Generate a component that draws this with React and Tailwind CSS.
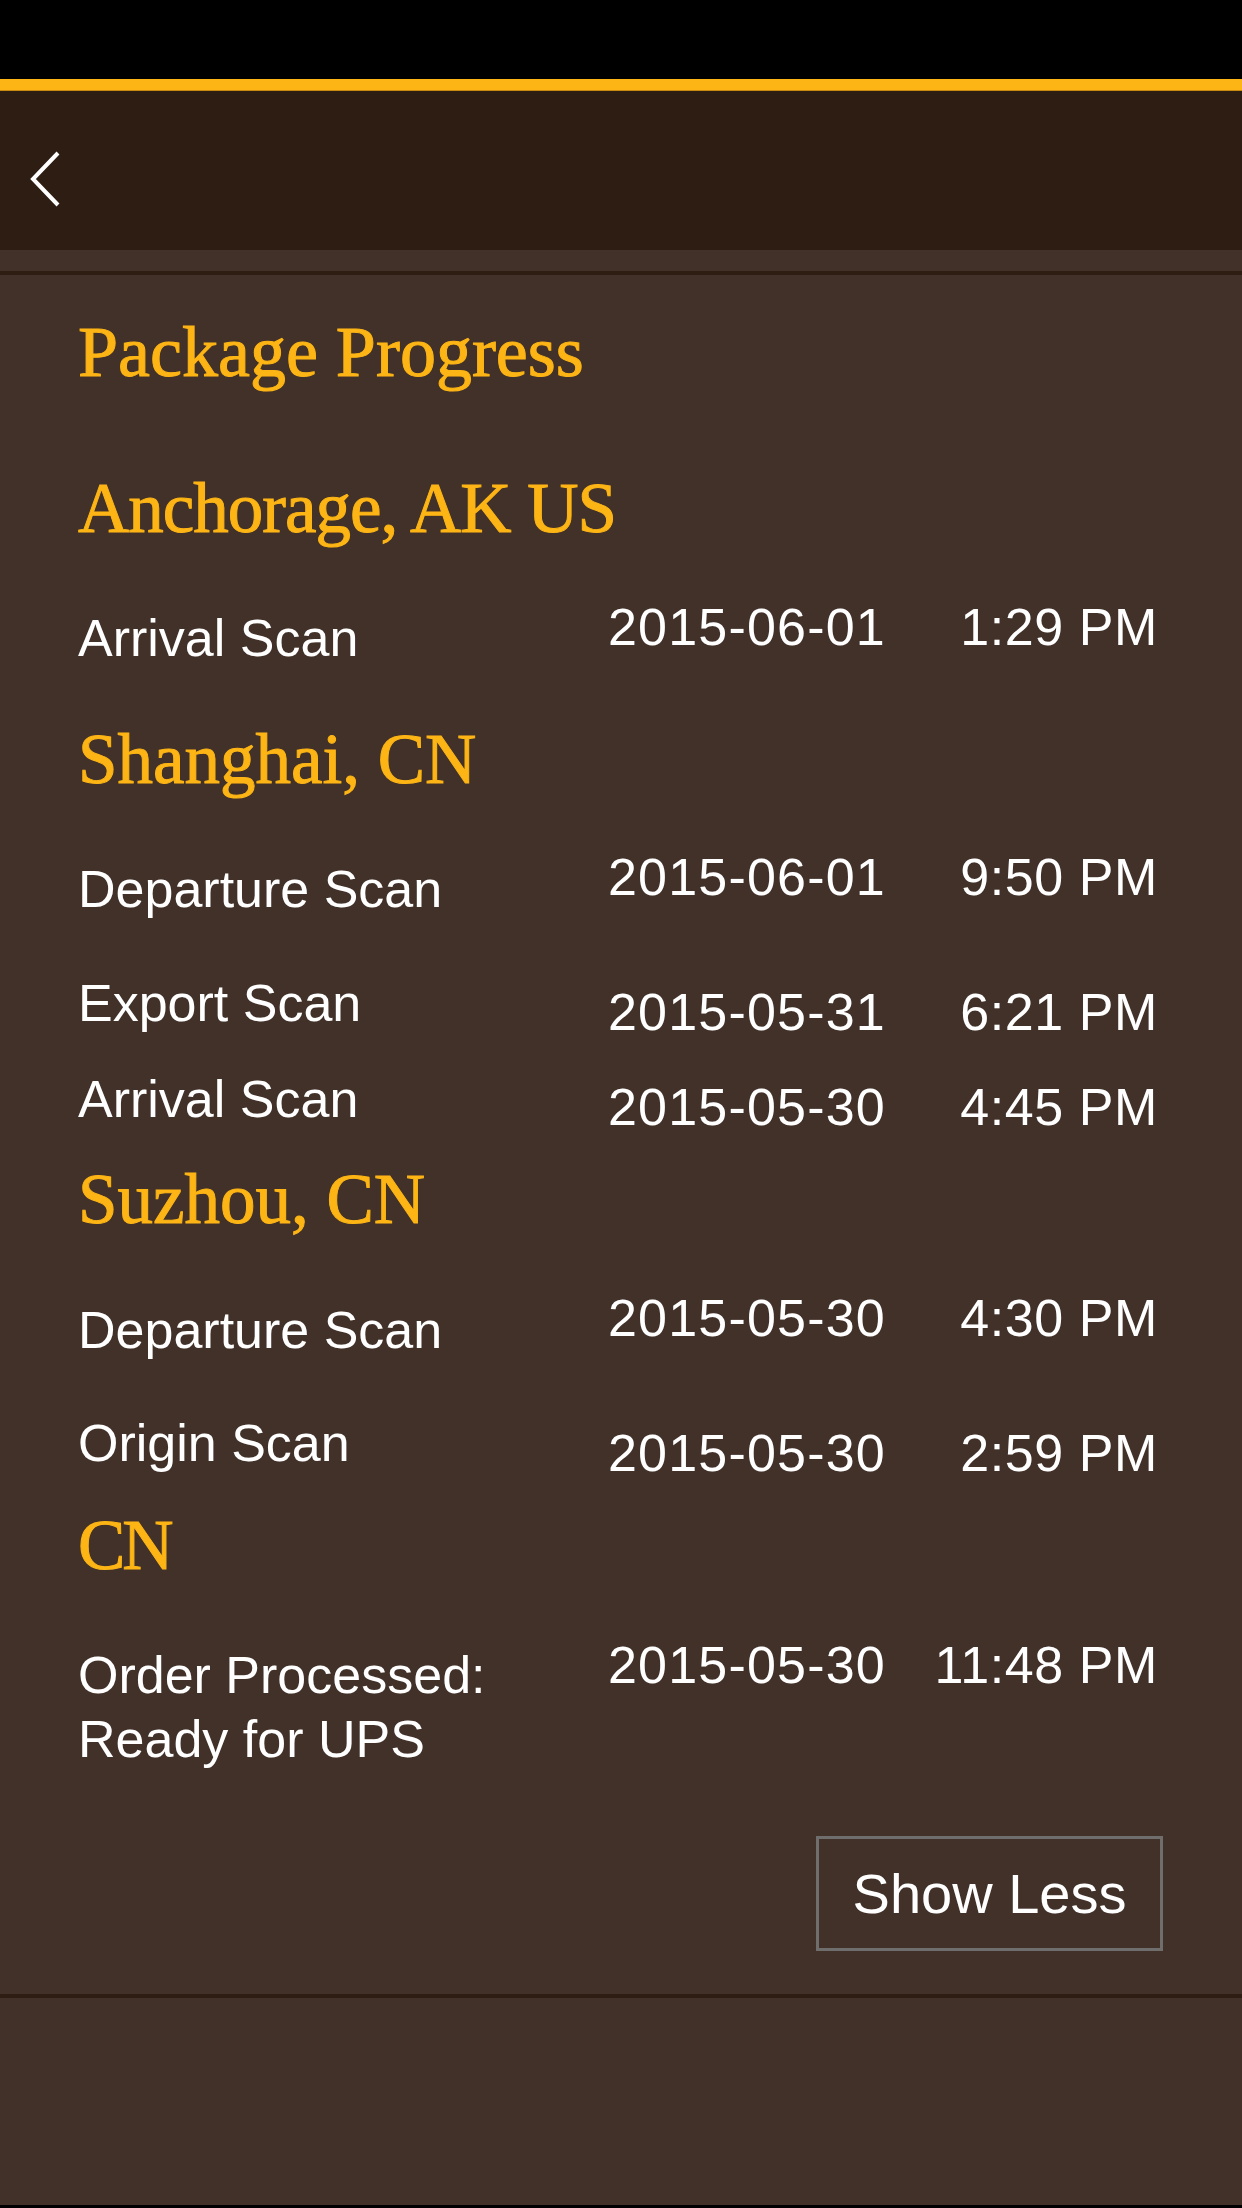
const sections = [
  {
    place: "Anchorage, AK US",
    mt: "mt-[86px]",
    track: "tracking-[-1px]",
    rows: [
      { label: "Arrival Scan", date: "2015-06-01", time: "1:29 PM", mt: "mt-[58px]", lp: "pt-[11px]", dp: "pt-0" },
    ],
  },
  {
    place: "Shanghai, CN",
    mt: "mt-[60px]",
    track: "tracking-normal",
    rows: [
      { label: "Departure Scan", date: "2015-06-01", time: "9:50 PM", mt: "mt-[57px]", lp: "pt-[12px]", dp: "pt-0" },
      { label: "Export Scan", date: "2015-05-31", time: "6:21 PM", mt: "mt-[62px]", lp: "pt-0", dp: "pt-[9px]" },
      { label: "Arrival Scan", date: "2015-05-30", time: "4:45 PM", mt: "mt-[35px]", lp: "pt-0", dp: "pt-[8px]" },
    ],
  },
  {
    place: "Suzhou, CN",
    mt: "mt-[31px]",
    track: "tracking-normal",
    rows: [
      { label: "Departure Scan", date: "2015-05-30", time: "4:30 PM", mt: "mt-[58px]", lp: "pt-[12px]", dp: "pt-0" },
      { label: "Origin Scan", date: "2015-05-30", time: "2:59 PM", mt: "mt-[61px]", lp: "pt-0", dp: "pt-[10px]" },
    ],
  },
  {
    place: "CN",
    mt: "mt-[31px]",
    track: "tracking-[-3px]",
    rows: [
      {
        label: ["Order Processed:", "Ready for UPS"],
        date: "2015-05-30",
        time: "11:48 PM",
        mt: "mt-[59px]",
        lp: "pt-[4px]",
        dp: "pt-0",
      },
    ],
  },
];

const sans = "font-['Liberation_Sans',Arial,sans-serif]";
const serif =
  "font-['Liberation_Serif','Times_New_Roman',serif] text-[#fdb515] [-webkit-text-stroke:1px_#fdb515]";

function Row({ r }) {
  const multi = Array.isArray(r.label);
  return (
    <div className={`flex items-start text-white text-[52px] ${sans} ${r.mt}`}>
      <div className={`w-[530px] ${r.lp} ${multi ? "leading-[64px]" : "leading-[52px]"}`}>
        {multi ? r.label.map((l) => <div key={l}>{l}</div>) : r.label}
      </div>
      <div className={`flex flex-1 leading-[52px] ${r.dp}`}>
        <span className="tracking-[1.2px]">{r.date}</span>
        <span className="ml-auto tracking-[0.6px]">{r.time}</span>
      </div>
    </div>
  );
}

export default function App() {
  return (
    <div className="w-[1242px] h-[2208px] bg-[#423129] flex flex-col overflow-hidden">
      <div className="h-[79px] bg-black" />
      <div className="h-[12px] bg-[#fdb515] border-b border-[#c98a12]" />
      <header className="h-[159px] bg-[#2e1d12] pl-[30px] pt-[60px]">
        <svg width="30" height="56" viewBox="0 0 30 56" fill="none">
          <path d="M28 2 L3 28 L28 54" stroke="white" strokeWidth="4" />
        </svg>
      </header>
      <div className="h-[21px]" />
      <div className="h-[4px] bg-[#2e1d12]" />

      <main className="pl-[78px] pr-[84px] pt-[42px]">
        <h1 className={`text-[72px] leading-[70px] ${serif}`}>Package Progress</h1>
        {sections.map((s) => (
          <section key={s.place}>
            <h2 className={`text-[71px] leading-[70px] ${s.mt} ${s.track} ${serif}`}>{s.place}</h2>
            {s.rows.map((r, i) => (
              <Row key={i} r={r} />
            ))}
          </section>
        ))}
        <div className="flex justify-end mt-[65px] -mr-[5px]">
          <button
            className={`w-[347px] h-[115px] border-[3px] border-[#6f6e6c] text-white text-[56px] ${sans}`}
          >
            Show Less
          </button>
        </div>
      </main>

      <div className="mt-[43px] h-[4px] bg-[#2e1d12]" />
      <div className="flex-1" />
      <div className="h-[3px] bg-black" />
    </div>
  );
}
